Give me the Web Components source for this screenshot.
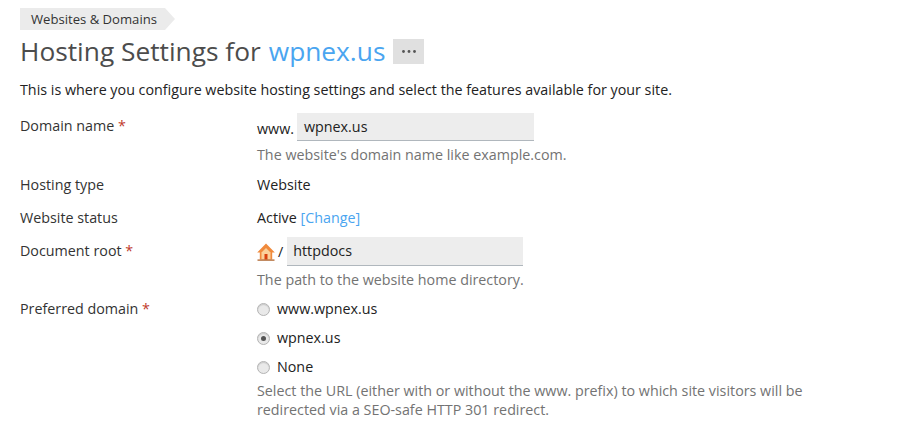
<!DOCTYPE html>
<html>
<head>
<meta charset="utf-8">
<title>Hosting Settings</title>
<style>
  html, body { margin: 0; background: #fff; }
  body { font: 14.3px/20px "Open Sans", sans-serif; color: #222; overflow: hidden; height: 429px; }
</style>
</head>
<body>
<hosting-page>
  <page-header crumb="Websites &amp; Domains" domain="wpnex.us">
    This is where you configure website hosting settings and select the features available for your site.
  </page-header>

  <form-row label="Domain name" required top="13" pad="3">
    <text-box prefix="www." value="wpnex.us" width="237"></text-box>
    <field-hint>The website's domain name like example.com.</field-hint>
  </form-row>
  <form-row label="Hosting type" top="11">Website</form-row>
  <form-row label="Website status" top="13">Active <a-link>[Change]</a-link></form-row>
  <form-row label="Document root" required top="9" pad="4">
    <text-box home prefix="/" value="httpdocs" width="236"></text-box>
    <field-hint>The path to the website home directory.</field-hint>
  </form-row>
  <form-row label="Preferred domain" required top="10">
    <radio-item>www.wpnex.us</radio-item>
    <radio-item checked>wpnex.us</radio-item>
    <radio-item>None</radio-item>
    <field-hint flush>Select the URL (either with or without the www. prefix) to which site visitors will be<br>redirected via a SEO-safe HTTP 301 redirect.</field-hint>
  </form-row>
</hosting-page>

<script>
class HostingPage extends HTMLElement {
  constructor() {
    super();
    this.attachShadow({ mode: 'open' });
    this.shadowRoot.innerHTML = `
      <style>
        :host { display: block; padding: 8px 20px 0; }
      </style>
      <slot></slot>`;
  }
}

class PageHeader extends HTMLElement {
  constructor() {
    super();
    this.attachShadow({ mode: 'open' });
    this.shadowRoot.innerHTML = `
      <style>
        :host { display: block; }
        .crumb { display: flex; height: 22px; }
        .crumb span {
          background: #ebebeb; color: #333; font-size: 13.1px; line-height: 22px;
          padding: 0 8px 0 11px;
        }
        .crumb i {
          width: 0; height: 0; border-left: 10px solid #ebebeb;
          border-top: 11px solid transparent; border-bottom: 11px solid transparent;
        }
        h1 {
          display: flex; align-items: center; margin: 2px 0 0; height: 38px;
          font-weight: 400; font-size: 26.3px; line-height: 38px; color: #4c4c4c;
        }
        h1 b { font-weight: 400; color: #4aa5f0; margin-left: 8px; }
        .more {
          width: 31px; height: 25px; margin-left: 8px; background: #e0e0e0;
          display: flex; align-items: center; justify-content: center;
        }
        p { margin: 10px 0 0; color: #222; line-height: 20px; }
      </style>
      <div class="crumb"><span></span><i></i></div>
      <h1>Hosting Settings for <b></b>
        <div class="more"><svg width="14" height="3" viewBox="0 0 14 3"><g fill="#555">
          <circle cx="1.5" cy="1.5" r="1.4"/><circle cx="7" cy="1.5" r="1.4"/><circle cx="12.5" cy="1.5" r="1.4"/>
        </g></svg></div>
      </h1>
      <p><slot></slot></p>`;
  }
  connectedCallback() {
    this.shadowRoot.querySelector('.crumb span').textContent = this.getAttribute('crumb');
    this.shadowRoot.querySelector('h1 b').textContent = this.getAttribute('domain');
  }
}

class FormRow extends HTMLElement {
  constructor() {
    super();
    this.attachShadow({ mode: 'open' });
    this.shadowRoot.innerHTML = `
      <style>
        :host { display: grid; grid-template-columns: 237px 1fr; }
        .label { color: #333; }
        .req { color: #c0392b; }
      </style>
      <div class="label"></div>
      <div class="field"><slot></slot></div>`;
  }
  connectedCallback() {
    const label = this.shadowRoot.querySelector('.label');
    label.textContent = this.getAttribute('label');
    if (this.hasAttribute('required')) label.insertAdjacentHTML('beforeend', ' <span class="req">*</span>');
    label.style.paddingTop = (this.getAttribute('pad') || 0) + 'px';
    this.style.marginTop = (this.getAttribute('top') || 0) + 'px';
  }
}

class TextBox extends HTMLElement {
  constructor() {
    super();
    this.attachShadow({ mode: 'open' });
    this.shadowRoot.innerHTML = `
      <style>
        :host { display: flex; align-items: center; }
        .pre { margin-right: 3px; padding-top: 3px; }
        :host([home]) .pre { margin-right: 4px; padding-top: 0; }
        .box {
          height: 27px; line-height: 27px; padding: 0 7px; box-sizing: content-box;
          background: #ededed; border-bottom: 1px solid #b0b7bd; color: #222;
        }
        :host([home]) .box { height: 28px; line-height: 28px; padding: 0 7px 0 6px; }
        svg { margin-right: 3px; }
      </style>
      <span class="pre"></span><div class="box"></div>`;
  }
  connectedCallback() {
    const root = this.shadowRoot;
    root.querySelector('.pre').textContent = this.getAttribute('prefix');
    const box = root.querySelector('.box');
    box.textContent = this.getAttribute('value');
    box.style.width = (this.getAttribute('width') - 13 - (this.hasAttribute('home') ? 0 : 1)) + 'px';
    if (this.hasAttribute('home')) {
      root.querySelector('.pre').insertAdjacentHTML('beforebegin', `
        <svg width="18" height="18" viewBox="0 0 18 18">
          <path d="M9 .5 L17.8 9.5 L15.2 9.5 L15.2 16.5 L2.8 16.5 L2.8 9.5 L.2 9.5 Z" fill="#f08a3c"/>
          <path d="M4.5 9.5 L9 5 L13.5 9.5 L13.5 16 L4.5 16 Z" fill="#fbd09a"/>
          <rect x="7.5" y="11" width="3" height="5.5" fill="#d9400f"/>
          <rect x=".5" y="16.5" width="17" height="1.2" fill="#a85a20"/>
        </svg>`);
    }
  }
}

class FieldHint extends HTMLElement {
  constructor() {
    super();
    this.attachShadow({ mode: 'open' });
    this.shadowRoot.innerHTML = `
      <style>
        :host { display: block; color: #737373; line-height: 19px; margin-top: 4px; }
        :host([flush]) { margin-top: 0; }
      </style>
      <slot></slot>`;
  }
}

class ALink extends HTMLElement {
  constructor() {
    super();
    this.attachShadow({ mode: 'open' });
    this.shadowRoot.innerHTML = `
      <style>:host { color: #4aa5f0; cursor: pointer; }</style><slot></slot>`;
  }
}

class RadioItem extends HTMLElement {
  constructor() {
    super();
    this.attachShadow({ mode: 'open' });
    this.shadowRoot.innerHTML = `
      <style>
        :host { display: flex; align-items: center; height: 20px; margin-bottom: 9px; }
        :host(:last-of-type) { margin-bottom: 4px; }
        .dot {
          flex: none; width: 11px; height: 11px; border-radius: 50%; margin-right: 7px;
          background: #e9e9e9; border: 1px solid #b4b4b4;
          box-shadow: inset 0 1px 1px rgba(0,0,0,.14);
          display: flex; align-items: center; justify-content: center;
        }
        .dot i { width: 5px; height: 5px; border-radius: 50%; background: #555; display: none; }
        :host([checked]) .dot i { display: block; }
      </style>
      <span class="dot"><i></i></span><span><slot></slot></span>`;
  }
}

customElements.define('hosting-page', HostingPage);
customElements.define('page-header', PageHeader);
customElements.define('form-row', FormRow);
customElements.define('text-box', TextBox);
customElements.define('field-hint', FieldHint);
customElements.define('a-link', ALink);
customElements.define('radio-item', RadioItem);
</script>
</body>
</html>
